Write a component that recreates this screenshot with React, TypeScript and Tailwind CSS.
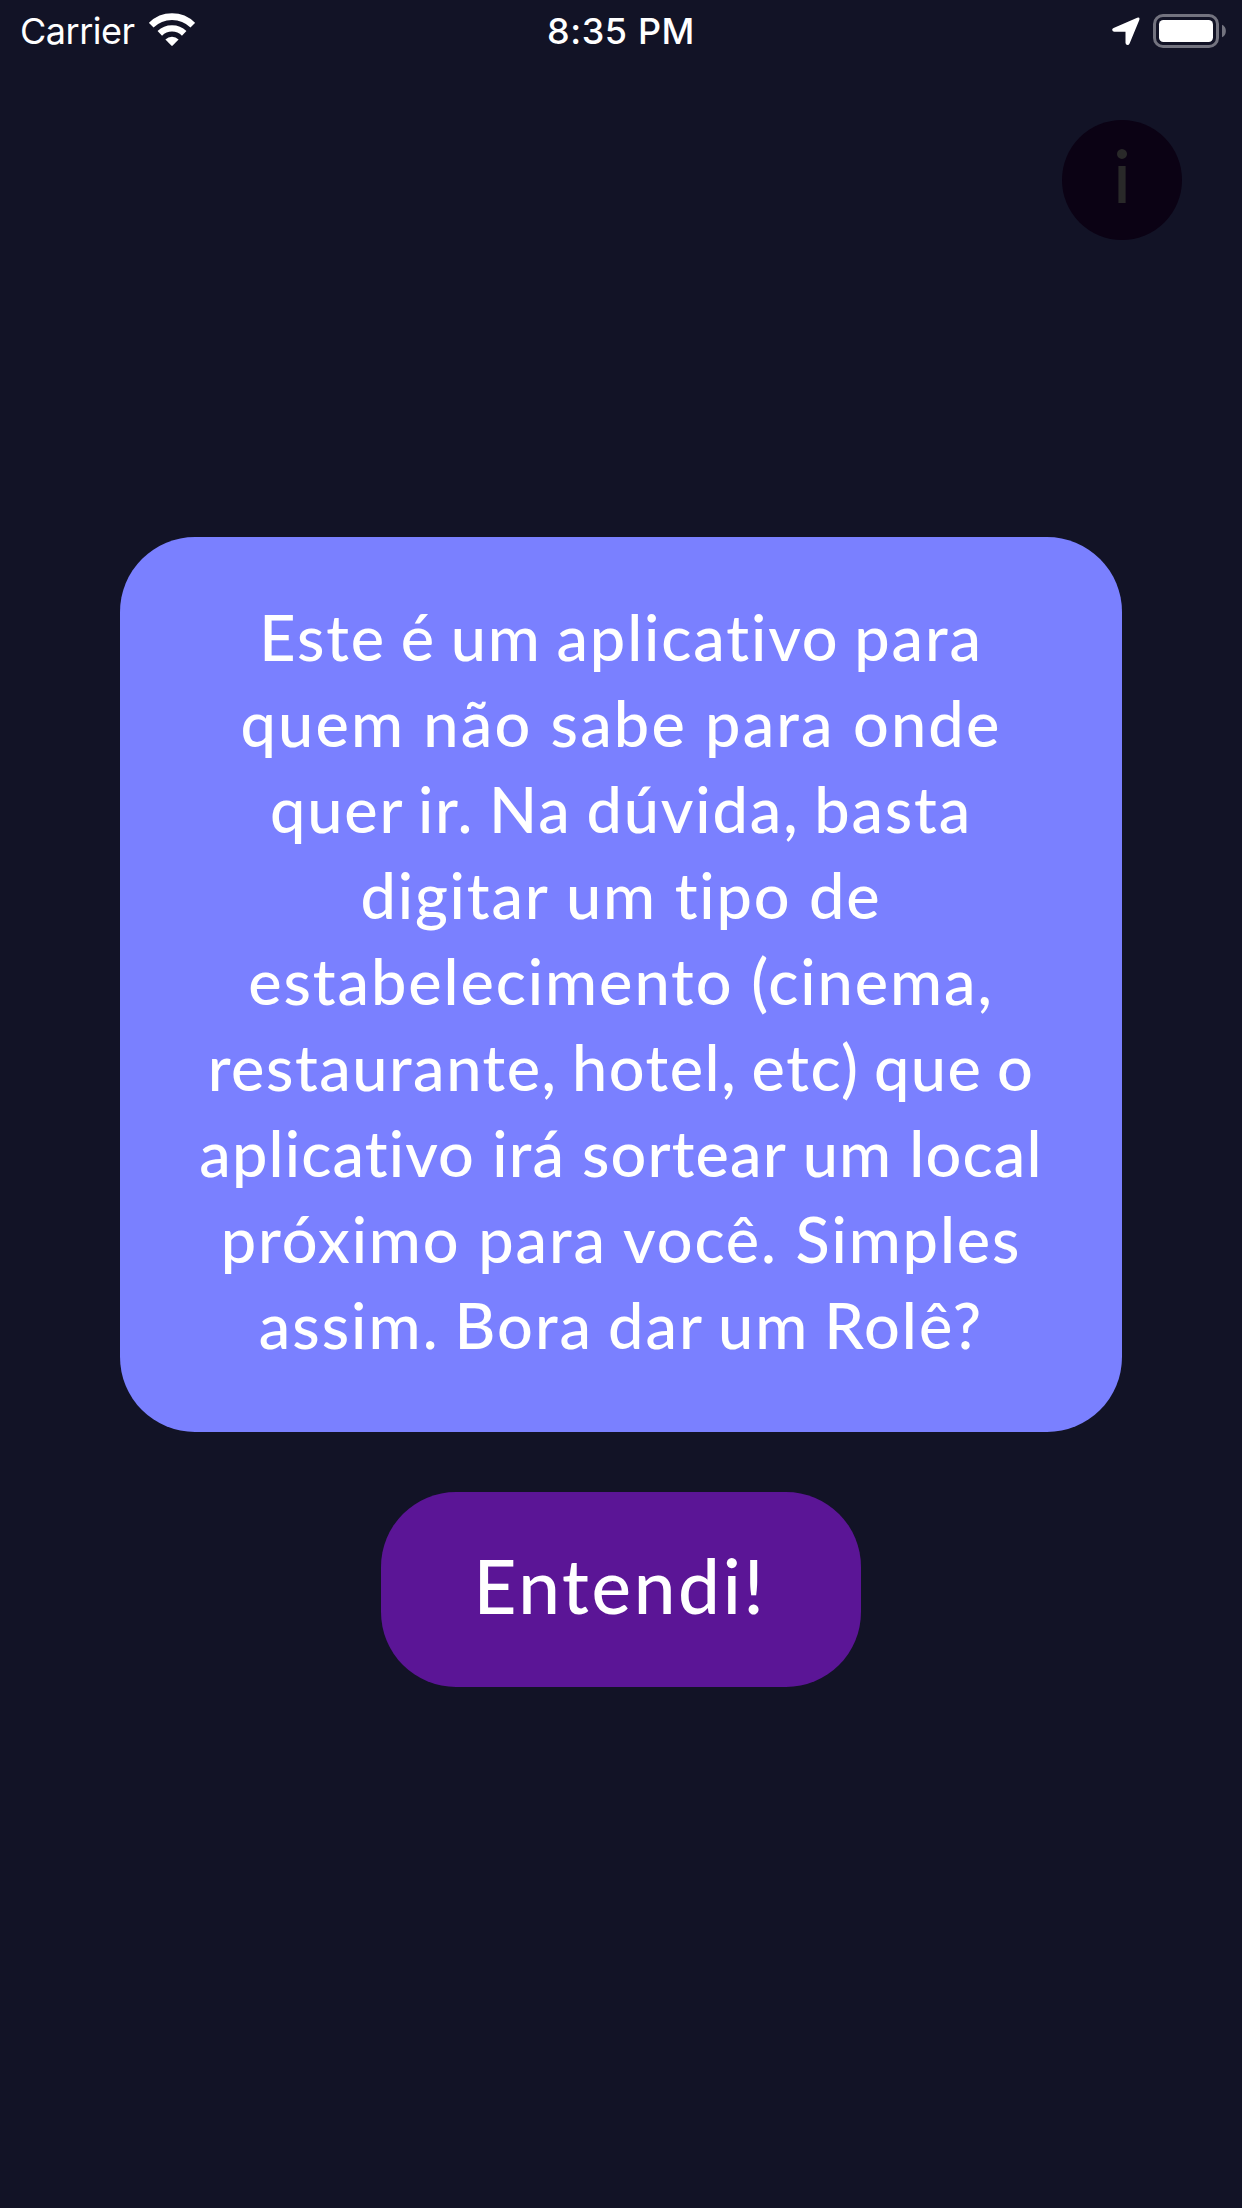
const message = [
  { text: "Este é um aplicativo para", spacing: "tracking-[1.87px] [word-spacing:-3px]" },
  { text: "quem não sabe para onde", spacing: "tracking-[2.19px]" },
  { text: "quer ir. Na dúvida, basta", spacing: "tracking-[1.87px] [word-spacing:-3px]" },
  { text: "digitar um tipo de", spacing: "tracking-[1.82px]" },
  { text: "estabelecimento (cinema,", spacing: "tracking-[1.92px]" },
  { text: "restaurante, hotel, etc) que o", spacing: "tracking-[1.54px] [word-spacing:-3px]" },
  { text: "aplicativo irá sortear um local", spacing: "tracking-[1.15px]" },
  { text: "próximo para você. Simples", spacing: "tracking-[1.87px]" },
  { text: "assim. Bora dar um Rolê?", spacing: "tracking-[2.06px] [word-spacing:-3px]" },
];

function WifiIcon() {
  return (
    <svg width="46" height="34" viewBox="0 0 46 34" fill="none" className="ml-[14px] mt-[-3px]">
      <path d="M2.2 12.2 A29.5 29.5 0 0 1 43.8 12.2" stroke="#fff" strokeWidth="6.6" />
      <path d="M10.8 20.4 A17.4 17.4 0 0 1 35.2 20.4" stroke="#fff" strokeWidth="6.4" />
      <path d="M16.4 26.4 A9.6 9.6 0 0 1 29.6 26.4 L23.7 32.6 Q23 33.3 22.3 32.6 Z" fill="#fff" />
    </svg>
  );
}

function LocationIcon() {
  return (
    <svg width="28" height="29" viewBox="0 0 28 29" className="mr-[13px] mt-px">
      <path
        d="M25.2 0.7 Q28.2 -0.1 27.3 3 L17.6 26.5 Q16.9 28.1 15.3 28 Q13.5 27.8 13.5 25.8 V14.7 H2.3 Q0.5 14.7 0.2 13.1 Q0 11.6 1.6 10.9 Z"
        fill="#fff"
      />
    </svg>
  );
}

function BatteryIcon() {
  return (
    <svg width="74" height="34" viewBox="0 0 74 34" fill="none" className="mr-[-5px]">
      <rect x="1.5" y="1.5" width="63" height="31" rx="8.5" stroke="#73737f" strokeWidth="3" />
      <rect x="6" y="6" width="54" height="22" rx="4.5" fill="#fff" />
      <path d="M69 10.8 C74.2 12.6 74.2 21.4 69 23.2 Z" fill="#73737f" />
    </svg>
  );
}

export default function App() {
  return (
    <div className="flex h-[2208px] w-[1242px] flex-col items-center overflow-hidden bg-[#121326] text-white">
      <header className="grid h-[60px] w-full grid-cols-3 items-center px-5 font-['Inter',sans-serif] text-[36px] leading-[61px]">
        <div className="flex items-center">
          <span className="pt-px tracking-[-0.5px]">Carrier</span>
          <WifiIcon />
        </div>
        <span className="pt-px text-center font-medium tracking-[0.6px]">8:35 PM</span>
        <div className="flex items-center justify-end">
          <LocationIcon />
          <BatteryIcon />
        </div>
      </header>

      <div className="mt-[60px] flex w-full justify-end pr-[60px]">
        <button className="flex size-[120px] items-center justify-center rounded-full bg-[#0b0214] pb-[11px] font-['Lato',sans-serif] text-[74px] font-medium leading-none text-[#292929]">
          i
        </button>
      </div>

      <section className="mt-[297px] flex h-[895px] w-[1002px] flex-col items-center rounded-[75px] bg-[#7a80ff] pt-[57px] font-['Lato',sans-serif] text-[63px] font-medium leading-[86px]">
        {message.map((line) => (
          <span key={line.text} className={`whitespace-nowrap ${line.spacing}`}>
            {line.text}
          </span>
        ))}
      </section>

      <button className="mt-[60px] h-[195px] w-[480px] rounded-[75px] bg-[#5b1596] pb-[8px] pr-[2px] font-['Lato',sans-serif] text-[74.5px] font-medium tracking-[2.7px]">
        Entendi!
      </button>
    </div>
  );
}
